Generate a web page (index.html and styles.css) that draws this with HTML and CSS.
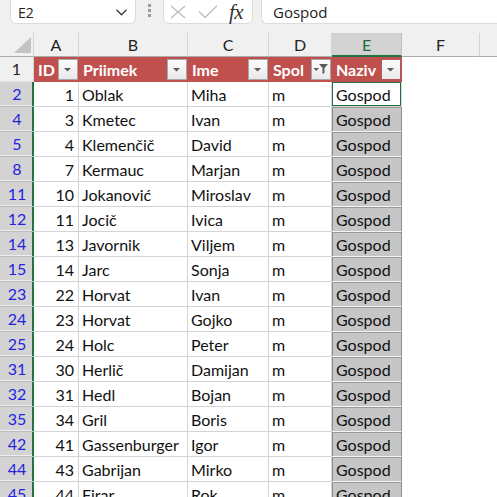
FILE: index.html
```html
<!DOCTYPE html>
<html>
<head>
<meta charset="utf-8">
<link rel="stylesheet" href="styles.css">
</head>
<body>
<div class="topbar">
  <div class="namebox">
    <span class="nb-text">E2</span>
    <svg class="chev" width="12" height="7" viewBox="0 0 12 7"><polyline points="0.5,0.8 5.5,5.8 10.5,0.8" fill="none" stroke="#3a3a3a" stroke-width="1.3"/></svg>
  </div>
  <div class="grip"><i></i><i></i><i></i></div>
  <div class="fxbox">
    <svg class="ic-x" width="16" height="14" viewBox="0 0 16 14"><path d="M1 1 L15 13 M15 1 L1 13" stroke="#bdbdbd" stroke-width="1.3" fill="none"/></svg>
    <svg class="ic-ok" width="20" height="14" viewBox="0 0 20 14"><polyline points="1,6.5 7,12.5 19,0.8" stroke="#bdbdbd" stroke-width="1.3" fill="none"/></svg>
    <span class="fx">fx</span>
  </div>
  <div class="formula">Gospod</div>
</div>

<div class="sheet">
  <div class="corner"><svg width="17" height="16" viewBox="0 0 17 16"><polygon points="17,0 17,16 0,16" fill="#c3c3c3"/></svg></div>
  <div class="ch">A</div>
  <div class="ch">B</div>
  <div class="ch">C</div>
  <div class="ch">D</div>
  <div class="ch chsel">E</div>
  <div class="ch">F</div>
  <div class="ch chrest"></div>

  <div class="rh rh1">1</div>
  <div class="th"><span>ID</span><div class="fbtn"><svg width="20" height="21" viewBox="0 0 20 21"><polygon points="6,9 13,9 9.5,12.5" fill="#5a5a5a"/></svg></div></div>
  <div class="th"><span>Priimek</span><div class="fbtn"><svg width="20" height="21" viewBox="0 0 20 21"><polygon points="6,9 13,9 9.5,12.5" fill="#5a5a5a"/></svg></div></div>
  <div class="th"><span>Ime</span><div class="fbtn"><svg width="20" height="21" viewBox="0 0 20 21"><polygon points="6,9 13,9 9.5,12.5" fill="#5a5a5a"/></svg></div></div>
  <div class="th"><span>Spol</span><div class="fbtn"><svg width="20" height="21" viewBox="0 0 20 21"><polygon points="2.5,9 8,9 5.25,12" fill="#5a5a5a"/><polygon points="8,5 17,5 13.5,9 13.5,14 11.5,15 11.5,9" fill="#5a5a5a"/></svg></div></div>
  <div class="th thlast"><span>Naziv</span><div class="fbtn"><svg width="20" height="21" viewBox="0 0 20 21"><polygon points="6,9 13,9 9.5,12.5" fill="#5a5a5a"/></svg></div></div>
  <div class="blank"></div>

  <div class="rh">2</div><div class="c num">1</div><div class="c">Oblak</div><div class="c">Miha</div><div class="c">m</div><div class="c eact">Gospod</div><div class="blank"></div>
  <div class="rh">4</div><div class="c num">3</div><div class="c">Kmetec</div><div class="c">Ivan</div><div class="c">m</div><div class="c esel">Gospod</div><div class="blank"></div>
  <div class="rh">5</div><div class="c num">4</div><div class="c">Klemenčič</div><div class="c">David</div><div class="c">m</div><div class="c esel">Gospod</div><div class="blank"></div>
  <div class="rh">8</div><div class="c num">7</div><div class="c">Kermauc</div><div class="c">Marjan</div><div class="c">m</div><div class="c esel">Gospod</div><div class="blank"></div>
  <div class="rh">11</div><div class="c num">10</div><div class="c">Jokanović</div><div class="c">Miroslav</div><div class="c">m</div><div class="c esel">Gospod</div><div class="blank"></div>
  <div class="rh">12</div><div class="c num">11</div><div class="c">Jocič</div><div class="c">Ivica</div><div class="c">m</div><div class="c esel">Gospod</div><div class="blank"></div>
  <div class="rh">14</div><div class="c num">13</div><div class="c">Javornik</div><div class="c">Viljem</div><div class="c">m</div><div class="c esel">Gospod</div><div class="blank"></div>
  <div class="rh">15</div><div class="c num">14</div><div class="c">Jarc</div><div class="c">Sonja</div><div class="c">m</div><div class="c esel">Gospod</div><div class="blank"></div>
  <div class="rh">23</div><div class="c num">22</div><div class="c">Horvat</div><div class="c">Ivan</div><div class="c">m</div><div class="c esel">Gospod</div><div class="blank"></div>
  <div class="rh">24</div><div class="c num">23</div><div class="c">Horvat</div><div class="c">Gojko</div><div class="c">m</div><div class="c esel">Gospod</div><div class="blank"></div>
  <div class="rh">25</div><div class="c num">24</div><div class="c">Holc</div><div class="c">Peter</div><div class="c">m</div><div class="c esel">Gospod</div><div class="blank"></div>
  <div class="rh">31</div><div class="c num">30</div><div class="c">Herlič</div><div class="c">Damijan</div><div class="c">m</div><div class="c esel">Gospod</div><div class="blank"></div>
  <div class="rh">32</div><div class="c num">31</div><div class="c">Hedl</div><div class="c">Bojan</div><div class="c">m</div><div class="c esel">Gospod</div><div class="blank"></div>
  <div class="rh">35</div><div class="c num">34</div><div class="c">Gril</div><div class="c">Boris</div><div class="c">m</div><div class="c esel">Gospod</div><div class="blank"></div>
  <div class="rh">42</div><div class="c num">41</div><div class="c">Gassenburger</div><div class="c">Igor</div><div class="c">m</div><div class="c esel">Gospod</div><div class="blank"></div>
  <div class="rh">44</div><div class="c num">43</div><div class="c">Gabrijan</div><div class="c">Mirko</div><div class="c">m</div><div class="c esel">Gospod</div><div class="blank"></div>
  <div class="rh">45</div><div class="c num">44</div><div class="c">Firar</div><div class="c">Rok</div><div class="c">m</div><div class="c esel">Gospod</div><div class="blank"></div>
</div>
</body>
</html>
```

FILE: styles.css
```css
* { box-sizing: border-box; }
html, body { margin: 0; padding: 0; background: #fff; overflow: hidden; }
body { width: 497px; height: 497px; font-family: Lato, "Liberation Sans", sans-serif; }

.topbar {
  height: 33px;
  background: #f0f0f0;
  display: flex;
  align-items: flex-start;
  padding-left: 10px;
}
.namebox, .fxbox, .formula {
  margin-top: -7px;
  height: 31px;
  background: #fff;
  border: 1px solid #dcdcdc;
  border-radius: 6px;
}
.namebox {
  width: 126px;
  display: flex;
  align-items: center;
  padding: 7px 7px 0 7px;
  font-family: "Open Sans", sans-serif;
  font-size: 14px;
  color: #222;
}
.nb-text { flex: 1; }
.chev { margin-right: 0; margin-top: 0; }
.grip {
  width: 27px;
  display: flex;
  flex-direction: column;
  align-items: center;
  gap: 2px;
  padding-top: 4px;
}
.grip i { display: block; width: 3px; height: 3px; background: #9a9a9a; }
.fxbox {
  width: 90px;
  display: flex;
  align-items: center;
  padding: 7px 0 0 6px;
}
.ic-x { margin-right: 12px; }
.ic-ok { margin-right: 11px; }
.fx {
  font-family: "Liberation Serif", serif;
  font-style: italic;
  font-size: 21px;
  color: #333;
  line-height: 20px;
  letter-spacing: -0.5px;
}
.formula {
  margin-left: 8px;
  flex: 1;
  border-right: none;
  border-radius: 6px 0 0 6px;
  padding: 7px 0 0 11px;
  font-family: "Open Sans", sans-serif;
  font-size: 15px;
  line-height: 23px;
  color: #222;
}

.sheet {
  display: grid;
  grid-template-columns: 34px 45px 109px 81px 63px 70px 78px 1fr;
  grid-template-rows: 24px;
  grid-auto-rows: 25px;
  font-size: 16px;
  color: #111;
}
.corner {
  background: #f0f0f0;
  border-right: 1px solid #d4d4d4;
  border-bottom: 1px solid #ababab;
  display: flex;
  justify-content: flex-end;
  align-items: flex-end;
  padding: 0 2px 3px 0;
}
.ch {
  background: #f0f0f0;
  border-right: 1px solid #d4d4d4;
  border-bottom: 1px solid #ababab;
  text-align: center;
  line-height: 24px;
  color: #222;
}
.chsel {
  background: #d3d3d3;
  color: #1d6b41;
  border-bottom: 2px solid #217346;
  border-right-color: #c0c0c0;
}
.chrest { border-right: none; }

.rh {
  background: #d3d3d3;
  color: #2323e0;
  text-align: center;
  line-height: 24px;
  border-bottom: 1px solid #bcbcbc;
  box-shadow: inset -2px 0 #217346, inset 0 -1px #ededed;
}
.rh1 {
  background: #f0f0f0;
  color: #222;
  box-shadow: none;
  border-right: 1px solid #d4d4d4;
  border-bottom: 1px solid #e0e0e0;
}
.th {
  background: #c0504d;
  color: #fff;
  font-weight: bold;
  display: flex;
  align-items: center;
  justify-content: space-between;
  padding: 0 1px 0 4px;
  line-height: 25px;
}
.fbtn {
  width: 20px;
  height: 21px;
  border: 1px solid #a9a9a9;
  background: linear-gradient(#fcfcfc, #e9e9eb);
  flex: none;
  display: flex;
}
.fbtn svg { display: block; margin: -1px; }
.thlast .fbtn { border-color: #b45a58; }

.c {
  border-right: 1px solid #d4d4d4;
  border-bottom: 1px solid #d4d4d4;
  padding: 0 3px;
  line-height: 25px;
  white-space: nowrap;
  overflow: hidden;
}
.num { text-align: right; padding-right: 4px; }
.eact {
  border-right: 1px solid #d4d4d4;
  box-shadow: inset 0 0 0 1px #217346;
  padding-left: 4px;
}
.esel {
  background: #c6c6c6;
  border-right: 1px solid #8e8e8e;
  border-bottom: 1px solid #f4f4f4;
  box-shadow: inset 1px 0 #8e8e8e, inset 0 1px #9a9a9a;
  padding-left: 4px;
}
.blank { grid-column: span 2; background: #fff; }
```
